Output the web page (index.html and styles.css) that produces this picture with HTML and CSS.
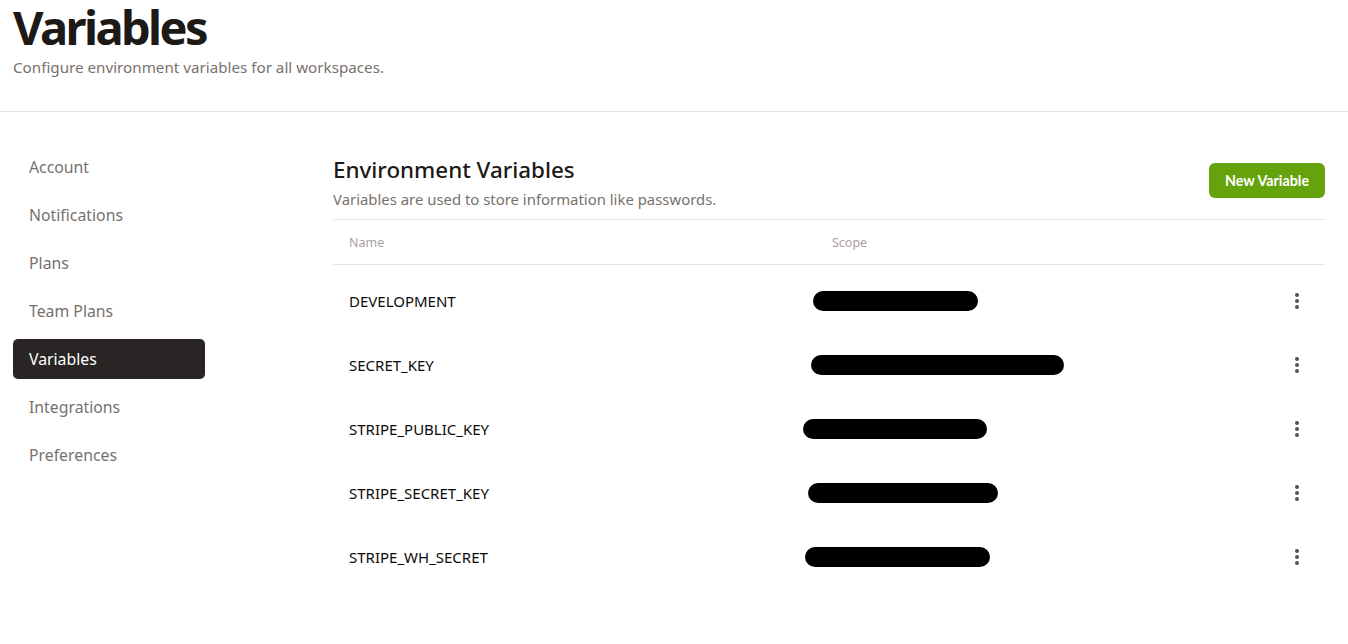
FILE: index.html
```html
<!DOCTYPE html>
<html>
<head>
<meta charset="utf-8">
<link rel="stylesheet" href="styles.css">
</head>
<body>
<header class="page-header">
  <h1 class="title">Variables</h1>
  <p class="subtitle">Configure environment variables for all workspaces.</p>
</header>
<div class="layout">
  <nav class="sidebar">
    <a class="nav-item">Account</a>
    <a class="nav-item">Notifications</a>
    <a class="nav-item">Plans</a>
    <a class="nav-item">Team Plans</a>
    <a class="nav-item active">Variables</a>
    <a class="nav-item">Integrations</a>
    <a class="nav-item">Preferences</a>
  </nav>
  <main class="main">
    <div class="section-head">
      <div>
        <h2 class="section-title">Environment Variables</h2>
        <p class="section-sub">Variables are used to store information like passwords.</p>
      </div>
      <button class="btn">New Variable</button>
    </div>
    <div class="table">
      <div class="row head">
        <div class="cell name">Name</div>
        <div class="cell scope">Scope</div>
        <div class="cell act"></div>
      </div>
      <div class="body">
        <div class="row">
          <div class="cell name">DEVELOPMENT</div>
          <div class="cell scope"><span class="pill" style="margin-left:-19px;width:165px"></span></div>
          <div class="cell act"><span class="kebab"><i></i><i></i><i></i></span></div>
        </div>
        <div class="row">
          <div class="cell name">SECRET_KEY</div>
          <div class="cell scope"><span class="pill" style="margin-left:-21px;width:253px"></span></div>
          <div class="cell act"><span class="kebab"><i></i><i></i><i></i></span></div>
        </div>
        <div class="row">
          <div class="cell name">STRIPE_PUBLIC_KEY</div>
          <div class="cell scope"><span class="pill" style="margin-left:-29px;width:184px"></span></div>
          <div class="cell act"><span class="kebab"><i></i><i></i><i></i></span></div>
        </div>
        <div class="row">
          <div class="cell name">STRIPE_SECRET_KEY</div>
          <div class="cell scope"><span class="pill" style="margin-left:-24px;width:190px"></span></div>
          <div class="cell act"><span class="kebab"><i></i><i></i><i></i></span></div>
        </div>
        <div class="row">
          <div class="cell name">STRIPE_WH_SECRET</div>
          <div class="cell scope"><span class="pill" style="margin-left:-27px;width:185px"></span></div>
          <div class="cell act"><span class="kebab"><i></i><i></i><i></i></span></div>
        </div>
      </div>
    </div>
  </main>
</div>
</body>
</html>
```
FILE: styles.css
```css
* { box-sizing: border-box; }
html, body { margin: 0; padding: 0; background: #fff; }
body {
  font-family: "Noto Sans", "Open Sans", sans-serif;
  color: #1c1917;
  width: 1348px;
}
.page-header {
  padding: 0 13px;
  height: 112px;
  border-bottom: 1px solid #e7e5e4;
}
.title {
  margin: 0;
  font-size: 47px;
  font-weight: 700;
  line-height: 54px;
  letter-spacing: -2.6px;
  color: #1c1917;
}
.subtitle {
  margin: 0;
  font-size: 15.2px;
  line-height: 26px;
  color: #78716c;
}
.layout {
  display: flex;
  padding: 35px 23px 0 13px;
}
.sidebar {
  width: 192px;
  display: flex;
  flex-direction: column;
  gap: 8px;
  flex-shrink: 0;
}
.nav-item {
  display: block;
  height: 40px;
  line-height: 40px;
  padding: 0 16px;
  font-size: 15.8px;
  color: #78716c;
  border-radius: 5px;
}
.nav-item.active {
  background: #292524;
  color: #fff;
}
.main {
  flex: 1;
  margin-left: 128px;
  padding-top: 8px;
}
.section-head {
  display: flex;
  justify-content: space-between;
  align-items: flex-start;
  padding-bottom: 10px;
  border-bottom: 1px solid #e7e5e4;
}
.section-title {
  margin: 0;
  font-size: 22.4px;
  font-weight: 500;
  line-height: 30px;
  color: #1c1917;
}
.section-sub {
  margin: 4px 0 0;
  font-size: 14.9px;
  line-height: 20px;
  color: #78716c;
}
.btn {
  margin-top: 8px;
  width: 116px;
  height: 35px;
  border: none;
  border-radius: 6px;
  background: #65a30d;
  color: #fff;
  font-family: Lato, sans-serif;
  font-weight: 700;
  font-size: 14.3px;
  padding: 0;
}
.row {
  display: flex;
  align-items: center;
  height: 64px;
}
.row.head {
  height: 45px;
  border-bottom: 1px solid #e7e5e4;
}
.body { padding-top: 4px; }
.cell { padding: 0 16px; }
.cell.name { width: 483px; font-size: 15px; color: #0c0a09; }
.cell.scope { flex: 1; display: flex; }
.cell.act { width: 56px; display: flex; justify-content: center; }
.row.head .cell { font-size: 12.5px; color: #a8a29e; }
.pill {
  display: block;
  height: 20px;
  border-radius: 10px;
  background: #000;
}
.kebab {
  display: flex;
  flex-direction: column;
  gap: 2px;
  align-items: center;
}
.kebab i {
  display: block;
  width: 4px;
  height: 4px;
  border-radius: 50%;
  background: #57534e;
}
```
